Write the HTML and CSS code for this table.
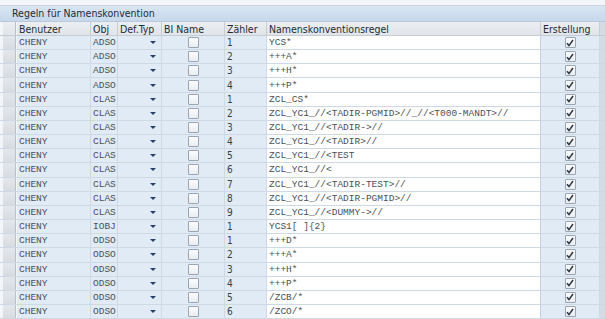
FILE: index.html
```html
<!DOCTYPE html>
<html>

<head>
    <title>Regeln für Namenskonvention</title>
    <link rel="stylesheet" href="styles.css">
</head>

<body>
    <div class="top-strip"></div>
    <div class="panel">
        <div class="panel-title">Regeln für Namenskonvention</div>
        <div class="grid">
            <div class="row head">
                <div class="cell sel"><span></span></div>
                <div class="cell">Benutzer</div>
                <div class="cell">Obj</div>
                <div class="cell">Def.Typ</div>
                <div class="cell">BI Name</div>
                <div class="cell">Zähler</div>
                <div class="cell">Namenskonventionsregel</div>
                <div class="cell">Erstellung</div>
                <div class="cell edge"></div>
            </div>
            <div id="rows"></div>
        </div>
    </div>

    <script>
        const data = [
            ["ADSO", 1, "YCS*"],
            ["ADSO", 2, "+++A*"],
            ["ADSO", 3, "+++H*"],
            ["ADSO", 4, "+++P*"],
            ["CLAS", 1, "ZCL_CS*"],
            ["CLAS", 2, "ZCL_YC1_//<TADIR-PGMID>//_//<T000-MANDT>//"],
            ["CLAS", 3, "ZCL_YC1_//<TADIR->//"],
            ["CLAS", 4, "ZCL_YC1_//<TADIR>//"],
            ["CLAS", 5, "ZCL_YC1_//<TEST"],
            ["CLAS", 6, "ZCL_YC1_//<"],
            ["CLAS", 7, "ZCL_YC1_//<TADIR-TEST>//"],
            ["CLAS", 8, "ZCL_YC1_//<TADIR-PGMID>//"],
            ["CLAS", 9, "ZCL_YC1_//<DUMMY->//"],
            ["IOBJ", 1, "YCS1[ ]{2}"],
            ["ODSO", 1, "+++D*"],
            ["ODSO", 2, "+++A*"],
            ["ODSO", 3, "+++H*"],
            ["ODSO", 4, "+++P*"],
            ["ODSO", 5, "/ZCB/*"],
            ["ODSO", 6, "/ZCO/*"],
            ["", "", ""]
        ];

        const rowsDiv = document.getElementById("rows");
        const check = '<svg width="8" height="8" viewBox="0 0 8 8"><path d="M1 4.2 L3 6.6 L7 1" fill="none" stroke="#2b3440" stroke-width="1.5"/></svg>';

        data.forEach(([obj, nr, rule]) => {
            const empty = obj === "";
            const row = document.createElement("div");
            row.className = "row";
            row.innerHTML =
                '<div class="cell sel"><span></span></div>' +
                '<div class="cell mono">' + (empty ? "" : "CHENY") + '</div>' +
                '<div class="cell mono">' + obj + '</div>' +
                '<div class="cell dd">' + (empty ? "" : '<i class="arrow"></i>') + '</div>' +
                '<div class="cell chk">' + (empty ? "" : '<span class="box"></span>') + '</div>' +
                '<div class="cell num">' + nr + '</div>' +
                '<div class="cell mono rule"></div>' +
                '<div class="cell chk">' + (empty ? "" : '<span class="box">' + check + '</span>') + '</div>' +
                '<div class="cell edge"></div>';
            row.querySelector(".rule").textContent = rule;
            rowsDiv.appendChild(row);
        });
    </script>
</body>

</html>
```

FILE: styles.css
```css
body {
    margin: 0;
    padding: 0;
    background-color: #f1f4f8;
    font-family: "Liberation Sans Narrow", "DejaVu Sans Condensed", "Liberation Sans", sans-serif;
    overflow: hidden;
}

.top-strip {
    height: 5px;
    background-color: #f3f6f9;
    border-bottom: 1px solid #c9d3de;
}

.panel-title {
    height: 15px;
    line-height: 15px;
    padding-left: 12px;
    font-size: 10.5px;
    color: #1d2a38;
    background: linear-gradient(#d9e5f2, #c6d8eb);
    border-bottom: 1px solid #b9c9da;
}

.row {
    display: grid;
    grid-template-columns: 17px 74px 27px 44px 63px 42px 274px 59px 5px;
    height: 14.16px;
    box-sizing: border-box;
}

.cell {
    box-sizing: border-box;
    border-bottom: 1px solid #cfd9e4;
    border-right: 1px solid #cfd9e4;
    background-color: #e0ebf6;
    padding-left: 2px;
    overflow: hidden;
    white-space: pre;
    display: flex;
    align-items: center;
}

.head {
    height: 14px;
}

.head .cell {
    background: linear-gradient(#eceef1, #e1e4e8);
    border-right: 1px solid #c6ccd3;
    border-bottom: 1px solid #c6ccd3;
    font-size: 10.5px;
    color: #222c36;
}

.sel {
    background-color: #f3f6f9;
    padding: 0 1px 0 3px;
    border-right: none;
}

.sel span {
    display: block;
    width: 100%;
    height: 100%;
    background: linear-gradient(#e3e6ea, #d8dce1);
    border-right: 1px solid #b9c0c8;
}

.head .sel {
    background: #f3f6f9;
    border-right: none;
}

.head .sel span {
    background: linear-gradient(#eceef1, #e1e4e8);
}

.mono {
    font-family: "Liberation Mono", "Courier New", monospace;
    font-size: 9.5px;
    color: #4a5058;
}

.num {
    font-size: 10px;
    color: #3a3f45;
}

.rule {
    background-color: #ffffff;
    border-right: 1px solid #c5d0dc;
}

.dd {
    justify-content: flex-end;
    padding-right: 5px;
}

.arrow {
    width: 0;
    height: 0;
    border-left: 3px solid transparent;
    border-right: 3px solid transparent;
    border-top: 3px solid #23406a;
}

.chk {
    justify-content: center;
    padding-left: 0;
}

.box {
    width: 9px;
    height: 9px;
    border: 1px solid #9aa5b1;
    border-radius: 1px;
    background: linear-gradient(#fbfcfd, #e9edf1);
    display: flex;
    align-items: center;
    justify-content: center;
}

.edge,
.head .edge {
    background: #d4dbe3;
    border-right: none;
}
```
